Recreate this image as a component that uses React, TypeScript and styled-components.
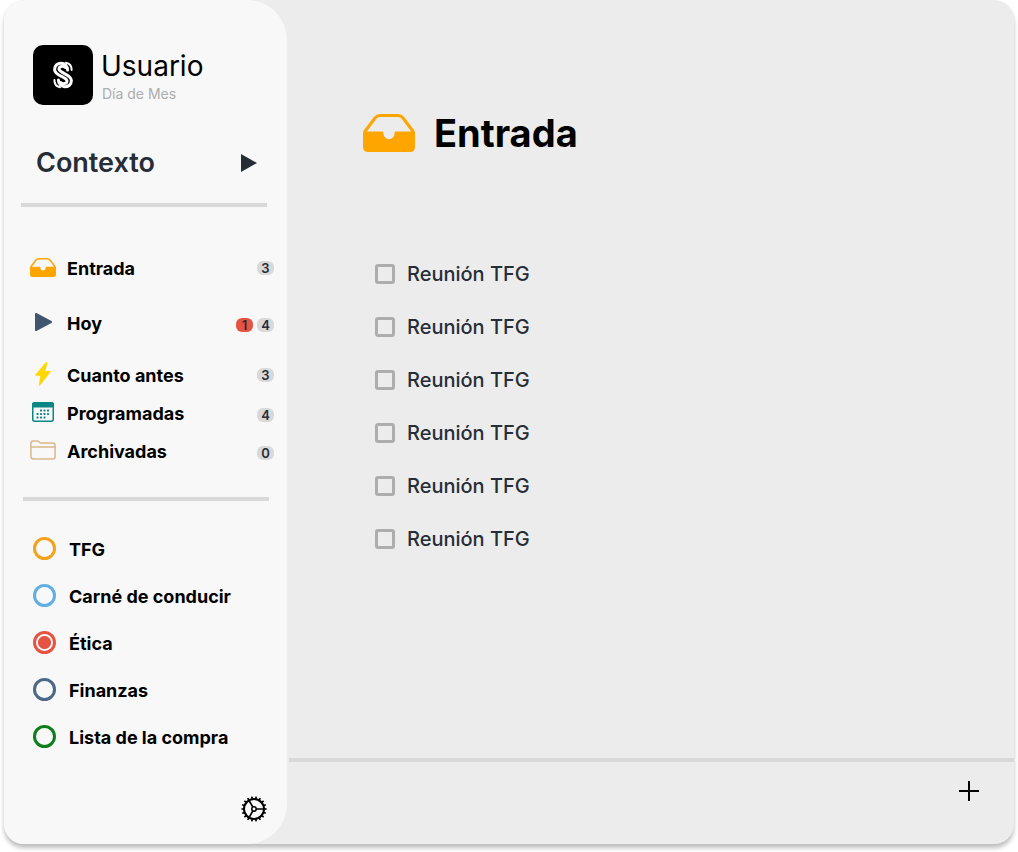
import React from 'react';
import styled, { createGlobalStyle } from 'styled-components';

const GlobalStyle = createGlobalStyle`
  *, *::before, *::after { box-sizing: border-box; }
  body {
    margin: 0;
    background: #fff;
    color: #000;
    font-family: Inter, "Liberation Sans", sans-serif;
  }
  svg { display: block; }
`;

const Window = styled.div`
  display: flex;
  min-height: calc(100vh - 8px);
  margin: 0 4px 8px;
  border-radius: 20px;
  background: #ececec;
  box-shadow: 0 4px 4px rgba(0, 0, 0, 0.25);
  overflow: hidden;
`;

const Sidebar = styled.aside`
  flex: 0 0 283px;
  display: flex;
  flex-direction: column;
  padding: 45px 13px 22px 17px;
  border-radius: 0 40px 40px 0;
  background: #f8f8f8;
`;

const Profile = styled.header`
  display: flex;
  gap: 8px;
  padding-left: 12px;
`;

const Avatar = styled.div`
  display: grid;
  place-items: center;
  width: 60px;
  height: 60px;
  border-radius: 10px;
  background: #000;
`;

const UserName = styled.p`
  margin: 3px 0 0;
  font-size: 28px;
  line-height: 36px;
`;

const UserDate = styled.p`
  margin: 1px 0 0;
  padding-left: 1px;
  font-size: 14px;
  line-height: 18px;
  color: #adadad;
`;

const PlainButton = styled.button`
  padding: 0;
  border: 0;
  background: none;
  color: #000;
  font-family: inherit;
  cursor: pointer;
`;

const ContextButton = styled(PlainButton)`
  display: flex;
  align-items: center;
  justify-content: space-between;
  margin-top: 40px;
  padding: 0 17px 0 15px;
  color: #272d37;
  font-size: 27px;
  font-weight: 600;
  line-height: 36px;
`;

const Divider = styled.hr<{ $shift?: boolean }>`
  width: 246px;
  height: 4px;
  margin: ${({ $shift }) => ($shift ? '30px 0 0 2px' : '22px 0 0')};
  border: 0;
  background: #d9d9d9;
`;

const Nav = styled.nav`
  display: flex;
  flex-direction: column;
  margin-top: 42px;
`;

const NavLink = styled.a<{ $height: number }>`
  display: flex;
  align-items: center;
  height: ${({ $height }) => $height}px;
  padding-left: 9px;
  color: #000;
  text-decoration: none;
  font-size: 18px;
  font-weight: 700;
`;

const NavIcon = styled.span`
  display: flex;
  justify-content: center;
  width: 26px;
  margin-right: 11px;
  padding-bottom: 2px;
`;

const Badges = styled.span<{ $drop: number }>`
  display: flex;
  gap: 4px;
  margin-left: auto;
  padding-top: ${({ $drop }) => $drop}px;
`;

const Badge = styled.span<{ $alert?: boolean }>`
  width: 17px;
  height: 14px;
  border-radius: 6px;
  background: ${({ $alert }) => ($alert ? '#e55342' : '#d9d9d9')};
  color: #272d37;
  font-size: 13px;
  font-weight: 600;
  line-height: 14px;
  text-align: center;
`;

const Projects = styled.fieldset`
  margin: 24px 0 0;
  padding: 0 0 0 12px;
  border: 0;
`;

const Project = styled.label`
  display: flex;
  align-items: center;
  gap: 13px;
  height: 47px;
  font-size: 18px;
  font-weight: 700;
  cursor: pointer;
`;

const ProjectName = styled.span`
  padding-top: 2px;
`;

const Radio = styled.input<{ $color: string }>`
  appearance: none;
  width: 23px;
  height: 23px;
  margin: 0;
  border: 3px solid ${({ $color }) => $color};
  border-radius: 50%;
  &:checked {
    background: radial-gradient(circle, ${({ $color }) => $color} 6px, transparent 7px);
  }
`;

const SettingsButton = styled(PlainButton)`
  align-self: flex-end;
  margin: auto 7px 0 0;
`;

const Main = styled.main`
  flex: 1;
  display: flex;
  flex-direction: column;
  padding-left: 2px;
`;

const Content = styled.section`
  flex: 1;
  padding: 108px 40px 40px 74px;
`;

const Title = styled.h1`
  display: flex;
  align-items: center;
  gap: 19px;
  margin: 0;
  font-size: 38px;
  font-weight: 700;
  line-height: 50px;
`;

const Tasks = styled.ul`
  margin: 89px 0 0;
  padding: 0 0 0 12px;
  list-style: none;
`;

const Task = styled.label`
  display: flex;
  align-items: center;
  gap: 12px;
  height: 53px;
  color: #272d37;
  font-size: 20px;
  font-weight: 500;
`;

const CheckBox = styled.input`
  appearance: none;
  width: 20px;
  height: 20px;
  margin: 0;
  border: 3px solid #adadad;
  border-radius: 3px;
  &:checked { background: #adadad; }
`;

const Footer = styled.footer`
  display: flex;
  justify-content: flex-end;
  height: 86px;
  padding: 19px 35px 0 0;
  border-top: 4px solid #d9d9d9;
`;

const AddButton = styled(PlainButton)`
  align-self: flex-start;
`;

const Logo = () => (
  <svg width="20" height="28" viewBox="0 0 20 28" fill="none" stroke="#fff" strokeWidth="3" strokeLinecap="round">
    <path d="M14.600 9C14.600 .2 1.600 0 1.600 8.500C1.600 15 13.500 15.500 14 20C14 22.800 10 23.600 7.500 21.500" />
    <path d="M5.400 19C5.400 27.800 18.400 28 18.400 19.500C18.400 13 6.500 12.500 6 8C6 5.200 10 4.400 12.500 6.500" />
    <path d="M13 1.800C16.500 2.400 18.600 5 18.600 9" strokeWidth="2" />
    <path d="M7 26.200C3.500 25.600 1.400 23 1.400 19" strokeWidth="2" />
  </svg>
);

const InboxIcon = ({ width }: { width: number }) => (
  <svg width={width} height={(width * 38) / 52} viewBox="0 0 52 38">
    <path
      d="M1.500 18L12 4Q14 1.500 17 1.500H35Q38 1.500 40 4L50.500 18"
      fill="none"
      stroke="#ffa500"
      strokeWidth="3"
    />
    <path
      d="M0 17.500H19.500Q20.500 17.500 20.500 19C20.500 27 31.500 27 31.500 19Q31.500 17.500 32.500 17.500H52V33Q52 38 47 38H5Q0 38 0 33Z"
      fill="#ffa500"
    />
  </svg>
);

const PlayIcon = () => (
  <svg width="18" height="20" viewBox="0 0 18 20">
    <path d="M2 2L17 10L2 18Z" fill="#40566f" stroke="#40566f" strokeWidth="2" strokeLinejoin="round" />
  </svg>
);

const BoltIcon = () => (
  <svg width="16" height="24" viewBox="0 0 16 24">
    <path d="M11 .6L.6 13.200H6L4.400 23.400L15.400 9.600H9.600L12 .8Z" fill="#ffd600" stroke="#ffd600" strokeLinejoin="round" />
  </svg>
);

const CalendarIcon = () => (
  <svg width="22" height="20" viewBox="0 0 22 20" fill="#0c8585">
    <rect x=".75" y=".75" width="20.500" height="18.500" rx="2" fill="none" stroke="#0c8585" strokeWidth="1.500" />
    <path d="M0 5.500V3Q0 0 3 0H19Q22 0 22 3V5.500Z" />
    {[7.5, 11, 14.5].map((y, row) =>
      [4.5, 8, 11.5, 15].map((x, col) =>
        (row === 0 && col === 0) || (row === 2 && col === 3) ? null : (
          <rect key={`${x}-${y}`} x={x} y={y} width="2" height="2" rx=".4" />
        ),
      ),
    )}
  </svg>
);

const FolderIcon = () => (
  <svg width="26" height="20" viewBox="0 0 26 20" fill="none" stroke="#d9b88d" strokeWidth="1.500">
    <path d="M.9 16V3.500Q.9 1 3.400 1H7Q8.300 1 9 1.800L9.800 2.600Q10.300 3 11.500 3H22.500Q25.100 3 25.100 5.500V16.500Q25.100 19 22.500 19H3.400Q.9 19 .9 16Z" />
    <path d="M1 7H25" />
  </svg>
);

const GearIcon = () => (
  <svg width="26" height="26" viewBox="0 0 26 26" fill="none" stroke="#000">
    <circle cx="13" cy="13" r="10" strokeWidth="2" />
    <circle cx="13" cy="13" r="2.200" strokeWidth="1.500" />
    <path d="M15.200 13H23M11.900 11.100L8 4.400M11.900 14.900L8 21.600" strokeWidth="1.700" />
    {Array.from({ length: 18 }, (_, i) => (
      <path key={i} d="M13 2.800V.4" strokeWidth="1.700" transform={`rotate(${i * 20 + 10} 13 13)`} />
    ))}
  </svg>
);

const navItems = [
  { label: 'Entrada', icon: <InboxIcon width={26} />, count: 3, height: 38, drop: 0 },
  { label: 'Hoy', icon: <PlayIcon />, alert: 1, count: 4, height: 72, drop: 4 },
  { label: 'Cuanto antes', icon: <BoltIcon />, count: 3, height: 32, drop: 0 },
  { label: 'Programadas', icon: <CalendarIcon />, count: 4, height: 44, drop: 4 },
  { label: 'Archivadas', icon: <FolderIcon />, count: 0, height: 32, drop: 4 },
];

const projects = [
  { label: 'TFG', color: '#f0a31b' },
  { label: 'Carné de conducir', color: '#60aee4' },
  { label: 'Ética', color: '#e55342' },
  { label: 'Finanzas', color: '#4c6787' },
  { label: 'Lista de la compra', color: '#0c7f1c' },
];

const tasks = Array.from({ length: 6 }, () => 'Reunión TFG');

export default function App() {
  return (
    <>
      <GlobalStyle />
      <Window>
        <Sidebar>
          <Profile>
            <Avatar><Logo /></Avatar>
            <div>
              <UserName>Usuario</UserName>
              <UserDate>Día de Mes</UserDate>
            </div>
          </Profile>
          <ContextButton type="button">
            Contexto
            <svg width="16" height="18" viewBox="0 0 16 18"><path d="M0 0L16 9L0 18Z" fill="#272d37" /></svg>
          </ContextButton>
          <Divider />
          <Nav>
            {navItems.map((item) => (
              <NavLink key={item.label} href="#" $height={item.height}>
                <NavIcon>{item.icon}</NavIcon>
                {item.label}
                <Badges $drop={item.drop}>
                  {item.alert && <Badge $alert>{item.alert}</Badge>}
                  <Badge>{item.count}</Badge>
                </Badges>
              </NavLink>
            ))}
          </Nav>
          <Divider $shift />
          <Projects aria-label="Proyectos">
            {projects.map((project) => (
              <Project key={project.label}>
                <Radio type="radio" name="project" $color={project.color} defaultChecked={project.label === 'Ética'} />
                <ProjectName>{project.label}</ProjectName>
              </Project>
            ))}
          </Projects>
          <SettingsButton type="button" aria-label="Ajustes"><GearIcon /></SettingsButton>
        </Sidebar>
        <Main>
          <Content>
            <Title><InboxIcon width={52} />Entrada</Title>
            <Tasks>
              {tasks.map((task, index) => (
                <li key={index}>
                  <Task><CheckBox type="checkbox" />{task}</Task>
                </li>
              ))}
            </Tasks>
          </Content>
          <Footer>
            <AddButton type="button" aria-label="Añadir">
              <svg width="20" height="20" viewBox="0 0 20 20" stroke="#000" strokeWidth="2">
                <path d="M10 0V20M0 10H20" />
              </svg>
            </AddButton>
          </Footer>
        </Main>
      </Window>
    </>
  );
}
